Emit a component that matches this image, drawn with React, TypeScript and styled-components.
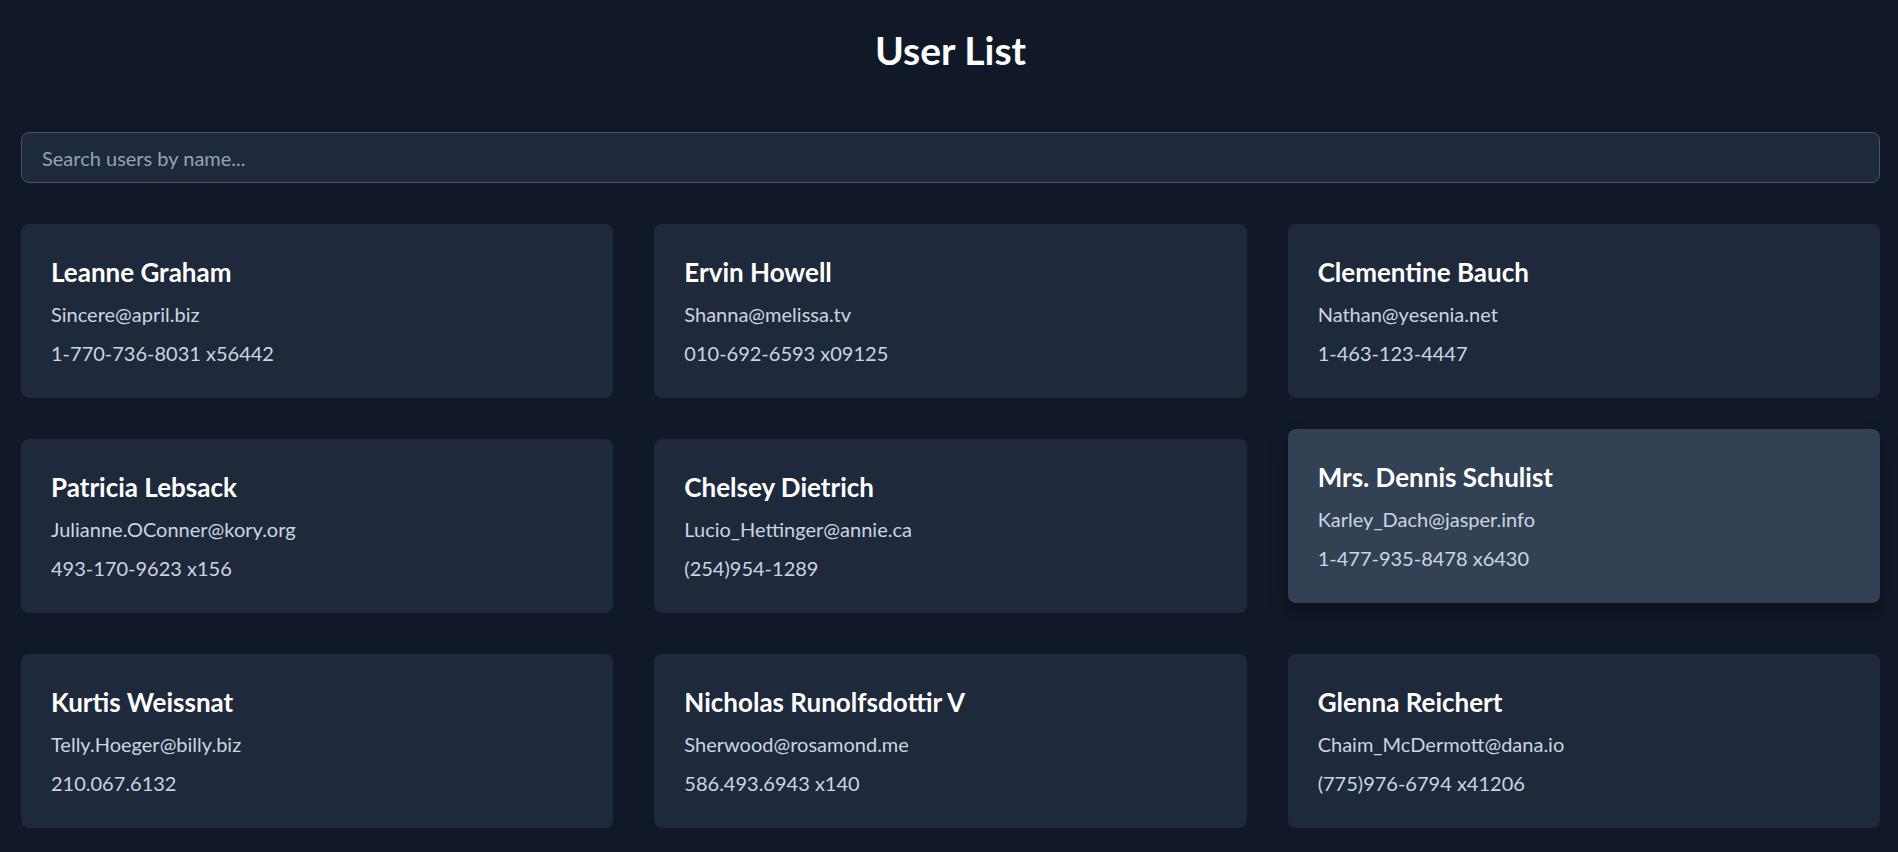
import React, { useState } from 'react';
import styled, { createGlobalStyle, css } from 'styled-components';

const GlobalStyle = createGlobalStyle`
  * {
    box-sizing: border-box;
  }
  body {
    margin: 0;
    background-color: #111827;
    color: #fff;
    font-family: 'Lato', 'Noto Sans', sans-serif;
  }
`;

const Page = styled.div`
  padding: 0 18px 24px 21px;
`;

const Title = styled.h1`
  margin: 26px 0 58px;
  font-size: 39px;
  line-height: 48px;
  font-weight: 700;
  text-align: center;
`;

const Search = styled.input`
  display: block;
  width: 100%;
  height: 51px;
  margin: 0 0 41px;
  padding: 12px 20px;
  font-family: inherit;
  font-size: 20px;
  color: #e2e8f0;
  background-color: #1e293b;
  border: 1px solid #475569;
  border-radius: 8px;
  outline: none;

  &::placeholder {
    color: #94a3b8;
  }
`;

const Grid = styled.div`
  display: grid;
  grid-template-columns: repeat(3, 1fr);
  gap: 41px;
`;

const Card = styled.div<{ $active?: boolean }>`
  padding: 32px 30px 31px;
  background-color: #1e293b;
  border-radius: 8px;
  cursor: pointer;
  transition: transform .2s, background-color .2s;

  &:hover {
    transform: translateY(-10px);
    background-color: #334155;
    box-shadow: 0 10px 20px rgba(0, 0, 0, .3);
  }

  ${({ $active }) => $active && css`
    transform: translateY(-10px);
    background-color: #334155;
    box-shadow: 0 10px 20px rgba(0, 0, 0, .3);
  `}
`;

const Name = styled.h2`
  margin: 0 0 12px;
  font-size: 26px;
  line-height: 32px;
  font-weight: 700;
  color: #fff;
`;

const Info = styled.p`
  margin: 0 0 11px;
  font-size: 20px;
  line-height: 28px;
  color: #cbd5e1;

  &:last-child {
    margin-bottom: 0;
  }
`;

const users = [
  { id: 1, name: 'Leanne Graham', email: 'Sincere@april.biz', phone: '1-770-736-8031 x56442' },
  { id: 2, name: 'Ervin Howell', email: 'Shanna@melissa.tv', phone: '010-692-6593 x09125' },
  { id: 3, name: 'Clementine Bauch', email: 'Nathan@yesenia.net', phone: '1-463-123-4447' },
  { id: 4, name: 'Patricia Lebsack', email: 'Julianne.OConner@kory.org', phone: '493-170-9623 x156' },
  { id: 5, name: 'Chelsey Dietrich', email: 'Lucio_Hettinger@annie.ca', phone: '(254)954-1289' },
  { id: 6, name: 'Mrs. Dennis Schulist', email: 'Karley_Dach@jasper.info', phone: '1-477-935-8478 x6430' },
  { id: 7, name: 'Kurtis Weissnat', email: 'Telly.Hoeger@billy.biz', phone: '210.067.6132' },
  { id: 8, name: 'Nicholas Runolfsdottir V', email: 'Sherwood@rosamond.me', phone: '586.493.6943 x140' },
  { id: 9, name: 'Glenna Reichert', email: 'Chaim_McDermott@dana.io', phone: '(775)976-6794 x41206' },
];

export default function App() {
  const [search, setSearch] = useState('');

  const filtered = users.filter(u => u.name.toLowerCase().includes(search.toLowerCase()));

  return (
    <Page>
      <GlobalStyle />
      <Title>User List</Title>
      <Search
        type='text'
        placeholder='Search users by name...'
        value={search}
        onChange={(e) => setSearch(e.target.value)}
      />
      <Grid>
        {filtered.map(user => (
          <Card key={user.id} $active={user.id === 6}>
            <Name>{user.name}</Name>
            <Info>{user.email}</Info>
            <Info>{user.phone}</Info>
          </Card>
        ))}
      </Grid>
    </Page>
  );
}
